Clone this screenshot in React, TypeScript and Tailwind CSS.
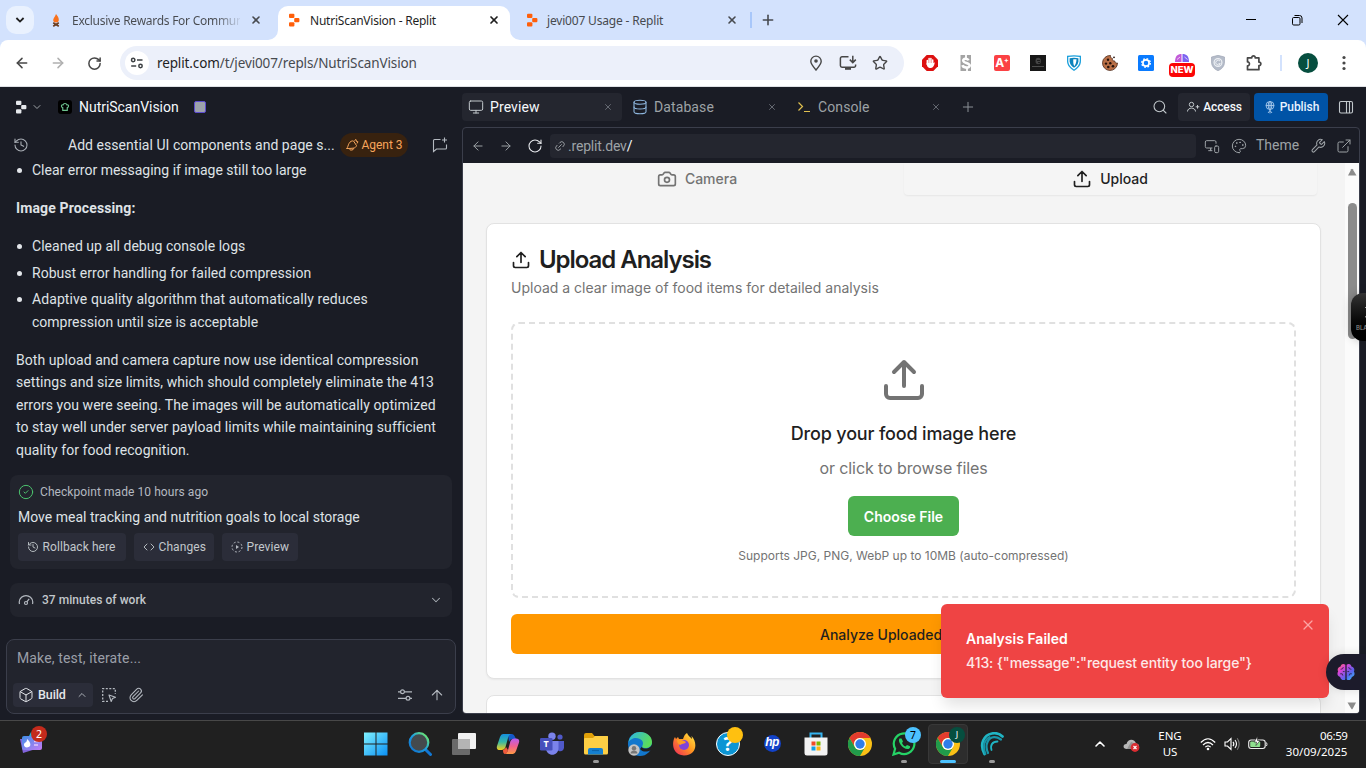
import type { ReactNode } from "react";
import {
  ArrowLeft, ArrowRight, ArrowUp, Box, Camera, ChevronDown, ChevronUp, CircleCheck, Code,
  Database, ExternalLink, History, Link2, Monitor, MonitorSmartphone, Paperclip, Palette,
  Plus, RotateCw, Search, Star, X,
} from "lucide-react";

const PLEX = "font-[Roboto,'Noto_Sans',sans-serif]";
const SEGOE = "font-['Noto_Sans','Open_Sans',sans-serif]";
const INTER = "font-[Inter,'Liberation_Sans',sans-serif]";

function Cell({ className, children }: { className: string; children?: ReactNode }) {
  return <div className={`flex shrink-0 items-center justify-center ${className}`}>{children}</div>;
}

function ReplitLogo({ className }: { className: string }) {
  return (
    <svg viewBox="0 0 16 16" className={className} fill="currentColor">
      <rect x="3" y="1.8" width="5.4" height="4.2" rx="1" />
      <rect x="8.2" y="6" width="5.2" height="4.2" rx="1" />
      <rect x="3" y="10.2" width="5.4" height="4.2" rx="1" />
    </svg>
  );
}

function TabStrip() {
  return (
    <div className={`flex h-10 bg-[#d3e2fd] text-[#474a4f] ${SEGOE}`}>
      <Cell className="ml-1.5 mt-1.5 size-7 rounded-[10px] bg-[#e9f1fe]">
        <svg viewBox="0 0 12 12" className="size-3" fill="none" stroke="#1f1f1f" strokeWidth="1.8"><path d="M2.4 4 6 7.6 9.6 4" /></svg>
      </Cell>
      <Cell className="ml-3.5 w-4">
        <svg viewBox="0 0 16 16" className="size-4">
          <path d="M8 2c2 2.300 3 4 2.800 6.200-.2 1.600-1.300 2.200-2.800 2.200s-2.700-.6-2.800-2.200C5.100 6.500 7 5 8 2Z" fill="#f9711c" />
          <path d="m5.200 10.800 5.600 3.400M10.800 10.800l-5.600 3.400" stroke="#6b3d20" strokeWidth="1.700" />
        </svg>
      </Cell>
      <div className="ml-2 w-[168px] whitespace-nowrap bg-linear-to-r from-[#474a4f] from-85% to-[#474a4f]/10 bg-clip-text text-[12px] leading-[41px] tracking-[-0.27px] text-transparent">Exclusive Rewards For Commun</div>
      <Cell className="w-8"><X className="size-3" strokeWidth={3.200} /></Cell>
      <div className="relative ml-1.5 mt-1.5 flex h-[34px] w-[232px] items-center rounded-t-[10px] bg-white text-[#1f1f1f]">
        <svg viewBox="0 0 10 10" className="absolute -left-2.5 bottom-0 size-2.5" fill="#fff"><path d="M10 0v10H0A10 10 0 0 0 10 0Z" /></svg>
        <svg viewBox="0 0 10 10" className="absolute -right-2.5 bottom-0 size-2.5" fill="#fff"><path d="M0 0v10h10A10 10 0 0 1 0 0Z" /></svg>
        <Cell className="-mt-1.5 ml-2 w-4"><ReplitLogo className="size-4 text-[#ff5f0a]" /></Cell>
        <div className="ml-2 h-[34px] w-[168px] whitespace-nowrap text-[12px] leading-[29px] tracking-[-0.23px]">NutriScanVision - Replit</div>
        <Cell className="-mt-1.5 w-8"><X className="size-3" strokeWidth={3.400} /></Cell>
      </div>
      <Cell className="ml-3.5 w-4"><ReplitLogo className="size-4 text-[#ff5f0a]" /></Cell>
      <div className="ml-[7px] w-[169px] whitespace-nowrap text-[12px] leading-[41px] tracking-[-0.18px]">jevi007 Usage - Replit</div>
      <Cell className="w-8"><X className="size-3" strokeWidth={3.200} /></Cell>
      <Cell className="-ml-px w-2"><div className="h-4 w-0.5 bg-[#a8c7fa]" /></Cell>
      <Cell className="ml-px w-6"><Plus className="size-4" strokeWidth={2.400} /></Cell>
      <div className="ml-auto flex">
        <Cell className="w-[46px]"><svg viewBox="0 0 10 10" className="size-2.5"><path d="M0 4.500h10" stroke="#000" /></svg></Cell>
        <Cell className="w-[46px]">
          <svg viewBox="0 0 12 12" className="size-3" fill="none" stroke="#000"><rect x="1.500" y="3.500" width="7.500" height="7.500" rx="1.200" /><path d="M3.500 1.500h5a2.500 2.500 0 0 1 2.500 2.500v5" /></svg>
        </Cell>
        <Cell className="w-[46px]"><svg viewBox="0 0 12 12" className="size-3" stroke="#000" strokeWidth="1.100"><path d="m1 1 10 10M11 1 1 11" /></svg></Cell>
      </div>
    </div>
  );
}

function AddressRow() {
  return (
    <div className="bg-[#d3e2fd]">
      <div className={`flex h-[47px] items-center rounded-t-[8px] border-b border-[#dfe1e5] bg-white text-[#474747] ${SEGOE}`}>
        <Cell className="ml-1 w-9"><ArrowLeft className="size-4" strokeWidth={2.300} /></Cell>
        <Cell className="w-9"><ArrowRight className="size-4 text-[#b0b0b0]" strokeWidth={2.300} /></Cell>
        <Cell className="w-9"><RotateCw className="size-[15px]" strokeWidth={2.400} /></Cell>
        <div className="ml-2 flex h-[34px] w-[784px] items-center rounded-full bg-[#ecf0fa]">
          <Cell className="ml-[5px] size-6 rounded-full bg-white">
            <svg viewBox="0 0 14 14" className="size-3.5" fill="none" stroke="#3c4043" strokeWidth="1.500">
              <circle cx="3.200" cy="4" r="1.700" /><path d="M7 4h5.500M1.200 10h5" /><circle cx="10.500" cy="10" r="1.700" />
            </svg>
          </Cell>
          <div className="ml-2 w-[642px] whitespace-nowrap text-[13.500px] tracking-[-0.12px] text-[#474a4f]"><span className="text-[#1f1f1f]">replit.com</span>/t/jevi007/repls/NutriScanVision</div>
          <Cell className="ml-px w-8">
            <svg viewBox="0 0 16 16" className="size-4" fill="none" stroke="#474747" strokeWidth="1.400"><path d="M8 15C5 11.500 2.800 9 2.800 6.300a5.200 5.200 0 0 1 10.400 0C13.200 9 11 11.500 8 15Z" /><circle cx="8" cy="6" r="1.800" fill="#474747" stroke="none" /></svg>
          </Cell>
          <Cell className="w-8">
            <svg viewBox="0 0 18 16" className="h-4 w-[18px]" fill="none" stroke="#474747" strokeWidth="1.500"><path d="M9.500 1.800H3A1.600 1.600 0 0 0 1.400 3.400v7.200A1.600 1.600 0 0 0 3 12.200h12a1.600 1.600 0 0 0 1.600-1.600V9.500M13.800.8v6.500M10.800 4.600l3 3 3-3" /><path d="M6 13.500h6" strokeWidth="2.600" /></svg>
          </Cell>
          <Cell className="w-8"><Star className="size-4" strokeWidth={2.100} /></Cell>
        </div>
        <Cell className="ml-2 w-9">
          <svg viewBox="0 0 16 16" className="size-4"><path d="M4.700 0h6.600L16 4.700v6.600L11.300 16H4.700L0 11.300V4.700Z" fill="#dd1010" /><path d="M5.300 5.500v4M7.100 3.600V9M8.900 3.600V9M10.700 5v4" stroke="#fff" strokeWidth="1.500" strokeLinecap="round" /><path d="M4.600 8h6.900l1-.8c.6.300-.6 5.800-3.700 5.800S4.800 11 4.600 8Z" fill="#fff" /></svg>
        </Cell>
        <Cell className="w-9">
          <svg viewBox="0 0 16 16" className="size-4"><path d="M2.500 0H13v16H2.500Z" fill="#a4a4a4" /><path d="M10.500 5.400C9.500 2.800 4.800 3.400 5.200 5.900c.4 2.300 6.500 1.900 6.500 4.700 0 2.900-6.400 2.600-7.200-.4" fill="none" stroke="#fff" strokeWidth="2.600" /><path d="M8 0v4M9 12v4" stroke="#fff" strokeWidth="1.800" /></svg>
        </Cell>
        <Cell className="w-9"><Cell className="size-4 rounded-[2px] bg-[#fb4144] font-[Inter] text-[12px] font-bold leading-none text-white">A<span className="-mt-1.5 text-[7px]">+</span></Cell></Cell>
        <Cell className="w-9">
          <svg viewBox="0 0 16 16" className="size-4"><rect width="16" height="16" fill="#171717" /><ellipse cx="8.200" cy="6" rx="2.700" ry="3.200" fill="#444" /><path d="M7 5.500h3M8 7.500h2M8.500 9v2" stroke="#1b1b1b" /><path d="M2 11.500h12" stroke="#4b4b4b" /></svg>
        </Cell>
        <Cell className="w-9">
          <svg viewBox="0 0 16 16" className="size-4"><path d="M1 .8q7-1.300 14 0v5C15 10.500 12 13.500 8 16 4 13.500 1 10.500 1 5.800Z" fill="#1ca0dc" /><path d="M2.300 2q5.700-1 11.400 0v4C13.600 9.700 11.200 12.300 8 14.400 4.800 12.300 2.300 9.700 2.300 6Z" fill="#fff" /><path d="M3.600 3.200q4.400-.7 8.800 0v3C12.300 9 10.500 11 8 12.800 5.500 11 3.700 9 3.600 6.200Z" fill="#0b83bd" /><path d="M7.300 4.200H10.500c-.1 3-.9 5-2.200 7-1-1.700-1.200-4-1-7Z" fill="#fff" /></svg>
        </Cell>
        <Cell className="w-9">
          <svg viewBox="0 0 16 16" className="size-4"><path d="M8.500.5A7.500 7.500 0 1 0 15.500 8c-1.800.4-2.800-.6-2.700-2-1.800.3-2.800-1-2.300-2.400C9 3.300 8.400 1.900 8.500.5Z" fill="#b96f46" stroke="#4e2a1b" strokeWidth=".8" /><g fill="#25120c"><circle cx="6" cy="4.800" r="1.200" /><circle cx="4" cy="8.600" r="1.200" /><circle cx="8.300" cy="8.300" r="1.200" /><circle cx="6.300" cy="12" r="1.300" /><circle cx="11" cy="11.300" r="1.300" /><circle cx="12" cy="2.300" r=".9" /></g></svg>
        </Cell>
        <Cell className="w-9">
          <svg viewBox="0 0 16 16" className="size-4"><rect width="16" height="16" rx="1.500" fill="#0a7bff" /><circle cx="8" cy="8" r="3.100" fill="none" stroke="#fff" strokeWidth="1.700" /><circle cx="8" cy="8" r="4.300" fill="none" stroke="#fff" strokeWidth="1.400" strokeDasharray="1.688 1.688" /></svg>
        </Cell>
        <Cell className="relative w-9 self-stretch">
          <svg viewBox="0 0 14 8" className="mb-2.5 h-2 w-3.5"><path d="M0 8C0 2 2.500 0 6.500 0v8Z" fill="#c25bd8" /><path d="M7.500 0C11.500 0 14 2 14 8H7.500Z" fill="#7c63f0" /><path d="M2 5.500 5 3M9.500 3l3 2.500" stroke="#fff" strokeWidth=".7" /></svg>
          <div className="absolute left-[5px] top-[23px] h-3.5 w-[26px] rounded-[4px] bg-[#fb0505] text-center font-[Inter] text-[9.500px] font-extrabold leading-[14px] text-white">NEW</div>
        </Cell>
        <Cell className="w-9">
          <svg viewBox="0 0 16 16" className="size-4"><path d="M8 .3 14.500 2v5c0 4.500-3 7.300-6.500 8.700C4.500 14.300 1.500 11.500 1.500 7V2Z" fill="#b5bcc9" stroke="#98a0b0" strokeWidth=".6" /><circle cx="8" cy="7.500" r="3.900" fill="none" stroke="#eef1f5" strokeWidth="1.200" /><path d="M10 6a2.400 2.400 0 1 0 .3 2.700H8.500" fill="none" stroke="#eef1f5" /></svg>
        </Cell>
        <Cell className="w-9">
          <svg viewBox="0 0 18 18" className="size-[18px]" fill="none" stroke="#474747" strokeWidth="1.700"><path d="M2.500 3.800h4.300c-.3-2.500 3.700-2.500 3.400 0h3.700v4.300c2.600-.3 2.600 3.700 0 3.400v4.200H2.500v-3.900c2.600.2 2.600-4.100 0-3.900Z" strokeLinejoin="round" /></svg>
        </Cell>
        <Cell className="w-[18px]"><div className="h-4 w-0.5 bg-[#d3e2fd]" /></Cell>
        <Cell className="w-9"><Cell className="size-5 rounded-full bg-[#064e3f] text-[11px] text-white">J</Cell></Cell>
        <Cell className="w-9"><svg viewBox="0 0 4 16" className="h-4 w-1" fill="#474747"><circle cx="2" cy="2.500" r="1.600" /><circle cx="2" cy="8" r="1.600" /><circle cx="2" cy="13.500" r="1.600" /></svg></Cell>
      </div>
    </div>
  );
}

function PaneTab({ icon, label, active }: { icon: ReactNode; label: string; active?: boolean }) {
  return (
    <div className={`mr-1 flex h-7 w-40 items-center rounded-[4px] ${active ? "bg-[#24262f] text-[#f5f9fc]" : "text-[#9da2a6]"}`}>
      <Cell className="ml-[6px] w-4">{icon}</Cell>
      <div className="ml-1.5 w-[113px] text-[14px] tracking-[0.1px]">{label}</div>
      <X className="size-2.5 shrink-0 text-[#6b7078]" strokeWidth={2.200} />
    </div>
  );
}

function WorkspaceHeader() {
  return (
    <div className={`flex h-10 items-center ${PLEX}`}>
      <div className="flex w-[462px] items-center text-[#f5f9fc]">
        <Cell className="ml-[13px] w-4"><ReplitLogo className="size-4 text-[#e6e8ec]" /></Cell>
        <Cell className="ml-0.5 w-3"><ChevronDown className="size-3 text-[#9da2a6]" /></Cell>
        <Cell className="ml-[15px] size-3.5 rounded-[3px] bg-black">
          <svg viewBox="0 0 12 12" className="size-2.5" fill="none" stroke="#6cc18e" strokeWidth="1.400"><path d="M3.300 10V6.800C.8 6.200 1.500 2.800 3.700 3.400 4.200 1.200 7.800 1.200 8.300 3.400 10.500 2.800 11.200 6.200 8.700 6.800V10Z" /></svg>
        </Cell>
        <div className="ml-[7px] w-[100px] text-[14px] tracking-[-0.03px]">NutriScanVision</div>
        <div className="ml-[15px] size-3 rounded-[2px] border-[1.500px] border-[#5c4bd0] bg-[#9da2ac]" />
      </div>
      <PaneTab active label="Preview" icon={<Monitor className="size-4 text-[#c2c8cc]" strokeWidth={1.500} />} />
      <PaneTab label="Database" icon={<Database className="size-4 text-[#8fb8e0]" strokeWidth={1.600} />} />
      <PaneTab label="Console" icon={<svg viewBox="0 0 16 16" className="size-4" fill="none" stroke="#e0c050" strokeWidth="1.200"><path d="m2.500 3.500 4 4-4 4M8 12.500h6" /></svg>} />
      <Cell className="ml-1.5 w-4"><Plus className="size-4 text-[#8b9097]" strokeWidth={1.500} /></Cell>
      <Cell className="ml-auto w-4 text-[#c2c8cc]"><Search className="size-4" strokeWidth={1.600} /></Cell>
      <Cell className="ml-[10px] h-7 w-[72px] rounded-[4px] bg-[#24262f] text-[12px] text-[#f5f9fc]">
        <svg viewBox="0 0 14 14" className="size-3.5" fill="none" stroke="#c2c8cc"><circle cx="5.500" cy="4.500" r="2.200" /><path d="M1.500 11.500c0-4.500 8-4.500 8 0M11.500 5v3.600M9.700 6.800h3.600" /></svg>
        <span className="ml-[3px] font-medium tracking-[-0.1px]">Access</span>
      </Cell>
      <Cell className="ml-1 h-7 w-[74px] rounded-[4px] bg-[#0053a6] text-[12px] text-[#e8f2ff]">
        <svg viewBox="0 0 14 14" className="size-3.5" fill="none" stroke="#a9c9ec" strokeWidth=".9"><circle cx="7" cy="5.500" r="4" /><ellipse cx="7" cy="5.500" rx="1.800" ry="4" /><path d="M3 5.500h8M7 1.500v12M5 13l2-2.500L9 13" /></svg>
        <span className="ml-[3px] font-medium tracking-[-0.08px]">Publish</span>
      </Cell>
      <Cell className="ml-2.5 mr-3 w-4">
        <svg viewBox="0 0 16 16" className="size-4" fill="none" stroke="#c2c8cc" strokeWidth="1.100"><rect x="1.500" y="2.500" width="13" height="11.500" rx="1.500" /><path d="M8.500 2.500V14M11.500 2.500V14" /></svg>
      </Cell>
    </div>
  );
}

function Bullet({ children }: { children: ReactNode }) {
  return (
    <li className="flex">
      <span className="mt-[9px] size-[5px] shrink-0 rounded-full bg-[#e3e6ea] ml-[1px] mr-[10px]" />
      <div>{children}</div>
    </li>
  );
}

function SmallButton({ className, icon, label }: { className: string; icon: ReactNode; label: string }) {
  return (
    <div className={`flex h-7 items-center rounded-[4px] bg-[#2b2d39] pl-[9px] text-[12px] text-[#c2c8cc] ${className}`}>
      {icon}<span className="ml-[3.500px] whitespace-nowrap tracking-[0.08px]">{label}</span>
    </div>
  );
}

function AgentPane() {
  return (
    <div className={`flex w-[462px] shrink-0 flex-col text-[#dfe2e6] ${PLEX}`}>
      <div className="flex h-9 items-center text-[14px]">
        <Cell className="ml-[13px] w-4"><History className="size-4 text-[#a9aeb5]" strokeWidth={1.600} /></Cell>
        <div className="ml-[39px] w-[268px] whitespace-nowrap tracking-[0.04px]">Add essential UI components and page s...</div>
        <Cell className="ml-1 h-6 w-[68px] rounded-full bg-[#38220f] text-[12px] text-[#f7a65c]">
          <svg viewBox="0 0 14 14" className="size-3.5 shrink-0" fill="none" stroke="#f7a65c" strokeLinejoin="round"><path d="M1.500 10.500C3 9.500 3 7 4 5.500 5 3.500 7 2.500 8.500 3l3 4.500c-.3 1.500-1.500 2.500-3.500 2.700-2 .2-4 .3-6.500.3Zm3 .2 1 1.500 2.500-.5.500-1.500M9.500 2.500l1.500-1 .5 2 1.500.3-1 1.700" /></svg>
          <span className="ml-[2px] whitespace-nowrap">Agent 3</span>
        </Cell>
        <Cell className="ml-6 w-4">
          <svg viewBox="0 0 16 16" className="size-4" fill="none" stroke="#b4b9c0" strokeWidth="1.100"><path d="M8.500 2.500h-6a1 1 0 0 0-1 1v11l3-2.500h9a1 1 0 0 0 1-1V7.500M12.500.5v5M10 3h5" /></svg>
        </Cell>
      </div>
      <div className="h-[310px] px-4 text-[14px] leading-[22.500px] tracking-[0.06px] whitespace-nowrap">
        <ul className="-mt-1 tracking-[-0.01px]"><Bullet>Clear error messaging if image still too large</Bullet></ul>
        <p className="mt-[15.500px] font-bold tracking-[0.13px]">Image Processing:</p>
        <ul className="mt-[15.500px] flex flex-col gap-1">
          <Bullet><span className="tracking-[0.030px]">Cleaned up all debug console logs</span></Bullet>
          <Bullet><span className="tracking-[0.040px]">Robust error handling for failed compression</span></Bullet>
          <Bullet><span className="tracking-[0.090px]">Adaptive quality algorithm that automatically reduces</span><br /><span className="tracking-[0.010px]">compression until size is acceptable</span></Bullet>
        </ul>
        <p className="mt-[15.500px]">
          Both upload and camera capture now use identical compression<br />settings and size limits, which should completely eliminate the 413<br />errors you were seeing. The images will be automatically optimized<br />to stay well under server payload limits while maintaining sufficient<br />quality for food recognition.
        </p>
      </div>
      <div className="ml-2.5 mt-0.5 h-[94px] w-[442px] rounded-lg bg-[#22242d] px-2 pt-2">
        <div className="flex h-[18px] items-center text-[12px] text-[#b4b9c0]">
          <CircleCheck className="size-4 text-[#4cc26e]" strokeWidth={1.500} /><span className="ml-1.5 tracking-[0.070px]">Checkpoint made 10 hours ago</span>
        </div>
        <div className="mt-[5px] text-[14px] leading-[22px] tracking-[0.01px]">Move meal tracking and nutrition goals to local storage</div>
        <div className="mt-[5px] flex gap-2">
          <SmallButton className="w-[108px]" label="Rollback here" icon={<History className="size-3 shrink-0" strokeWidth={1.800} />} />
          <SmallButton className="w-20" label="Changes" icon={<Code className="size-3 shrink-0" strokeWidth={1.800} />} />
          <SmallButton className="w-[76px]" label="Preview" icon={<svg viewBox="1 1 12 12" className="size-3 shrink-0" fill="none" stroke="#b4b9c0"><circle cx="7" cy="7" r="5" strokeDasharray="2 1.900" /><path d="M6 5v4l3-2Z" fill="#b4b9c0" stroke="none" /></svg>} />
        </div>
      </div>
      <div className="ml-2.5 mt-3.5 flex h-[34px] w-[442px] items-center rounded-lg bg-[#22242d] pl-2 text-[12px] text-[#c2c8cc]">
        <svg viewBox="0 0 16 16" className="size-4" fill="none" stroke="#b4b9c0" strokeWidth="1.200"><path d="M1.500 12a6.700 6.700 0 0 1 2-6.700 6.700 6.700 0 0 1 9 0 6.700 6.700 0 0 1 2 6.700M8.800 9.800l2.400-3" /><circle cx="8" cy="11" r="1.500" /></svg>
        <span className="ml-2 w-[387px] font-medium tracking-[0.04px]">37 minutes of work</span>
        <ChevronDown className="size-3.5 text-[#a9aeb5]" strokeWidth={1.800} />
      </div>
      <div className="ml-1.5 mt-[22px] h-[75px] w-[450px] rounded-lg border border-[#3b3e4b] bg-[#22242d] px-1.5">
        <div className="ml-1 mt-2 text-[14px] leading-[21px] tracking-[0.14px] text-[#9b9fa8]">Make, test, iterate...</div>
        <div className="mt-3.5 flex h-6 items-center text-[#b4b9c0]">
          <div className="flex h-6 w-20 items-center rounded-[4px] bg-[#2b2d39] pl-[5px] text-[12.500px] font-medium text-[#e3e6ea]">
            <Box className="size-4" strokeWidth={1.500} /><span className="ml-1 w-[32px] tracking-[-0.1px]">Build</span><ChevronUp className="ml-[6px] size-3 text-[#a9aeb5]" />
          </div>
          <svg viewBox="0 0 16 16" className="ml-2 size-4" fill="none" stroke="#b4b9c0" strokeWidth="1.300"><path d="M7 14.300H1.700V1.700h12.600V7" strokeDasharray="2 1.500" /><path d="m8 8 6.500 2.300-3 1.200-1.300 3Z" strokeWidth="1.100" strokeLinejoin="round" /></svg>
          <Paperclip className="ml-[11px] size-4" strokeWidth={1.600} />
          <svg viewBox="0 0 16 16" className="ml-[253px] size-4" fill="none" stroke="#b4b9c0" strokeWidth="1.200"><path d="M1 4.800h2.500M7.500 4.800H15M1 11.300h8M13 11.300h2" /><circle cx="5.500" cy="4.800" r="1.900" /><circle cx="11" cy="11.300" r="1.900" /></svg>
          <ArrowUp className="ml-4 size-4" strokeWidth={1.600} />
        </div>
      </div>
    </div>
  );
}

function UploadIcon({ className }: { className: string }) {
  return (
    <svg viewBox="0 0 24 24" className={`shrink-0 ${className}`} fill="none" stroke="currentColor" strokeWidth="2" strokeLinecap="round" strokeLinejoin="round">
      <path d="M21 15v4a2 2 0 0 1-2 2H5a2 2 0 0 1-2-2v-4M17 8l-5-5-5 5M12 3v12" />
    </svg>
  );
}

function BrowserBar() {
  return (
    <div className={`flex h-[35px] shrink-0 items-center text-[#9da2a6] ${PLEX}`}>
      <Cell className="ml-[7px] w-4"><ArrowLeft className="size-3.5" strokeWidth={1.700} /></Cell>
      <Cell className="ml-3 w-4"><ArrowRight className="size-3.5" strokeWidth={1.700} /></Cell>
      <Cell className="ml-[13px] w-4 text-[#e6e8ec]"><RotateCw className="size-4" strokeWidth={1.600} /></Cell>
      <div className="ml-[7px] flex h-6 w-[646px] items-center rounded-[4px] bg-[#24262f] pl-1 text-[14px] leading-none">
        <Link2 className="size-3 -rotate-45" strokeWidth={1.800} /><span className="ml-[2px] tracking-[-0.18px]">.replit.dev<span className="text-[#f5f9fc]">/</span></span>
      </div>
      <Cell className="ml-2 w-4"><MonitorSmartphone className="size-4" strokeWidth={1.500} /></Cell>
      <Cell className="ml-[11px] w-4"><Palette className="size-4" strokeWidth={1.500} /></Cell>
      <div className="ml-[9px] w-[44px] text-[14px]">Theme</div>
      <Cell className="ml-2.5 w-4">
        <svg viewBox="0 0 24 24" className="size-4" fill="none" stroke="currentColor" strokeWidth="1.600" strokeLinejoin="round"><path d="M14.700 6.300a1 1 0 0 0 0 1.400l1.600 1.600a1 1 0 0 0 1.400 0l3.770-3.770a6 6 0 0 1-7.940 7.940l-6.910 6.910a2.120 2.120 0 0 1-3-3l6.910-6.910a6 6 0 0 1 7.940-7.940Z" /></svg>
      </Cell>
      <Cell className="ml-[10px] w-4"><ExternalLink className="size-4" strokeWidth={1.500} /></Cell>
    </div>
  );
}

function PreviewPane() {
  return (
    <div className="mr-[6px] flex h-[587px] flex-1 flex-col overflow-hidden rounded-[4px] border border-[#3b3e4b]">
      <BrowserBar />
      <div className={`flex min-h-0 flex-1 bg-[#f4f4f4] text-[#1f1f1f] ${INTER}`}>
        <div className="w-[882px] overflow-hidden pl-[23px] pr-[24px]">
          <div className="flex h-8 items-start text-[14px] font-medium">
            <div className="flex h-8 w-[418px] items-center justify-center pl-[5px] pr-px text-[#737373]"><Camera className="size-5" /><span className="ml-2 leading-5">Camera</span></div>
            <div className="flex h-8 w-[413px] items-center justify-center rounded-b-[4px] bg-[#f5f5f5] pr-px shadow-[0_1px_2px_rgba(0,0,0,0.06)]"><UploadIcon className="size-5" /><span className="ml-2 leading-5">Upload</span></div>
          </div>
          <div className="mt-7 h-[456px] rounded-lg border border-[#e2e2e2] bg-white px-6 pt-5 shadow-xs">
            <div className="flex h-8 items-center"><UploadIcon className="size-5" /><h1 className="ml-2 text-[24px] font-semibold tracking-[-1.05px]">Upload Analysis</h1></div>
            <p className="mt-0.5 text-[14px] leading-5 text-[#737373]">Upload a clear image of food items for detailed analysis</p>
            <div className="mt-6 flex h-[276px] flex-col items-center rounded-lg border-2 border-dashed border-[#e0e0e0] pt-8">
              <UploadIcon className="size-12 text-[#737373]" />
              <p className="mt-4 text-[18px] font-medium leading-7 tracking-[-0.17px]">Drop your food image here</p>
              <p className="mt-2 text-[16px] leading-6 tracking-[-0.09px] text-[#737373]">or click to browse files</p>
              <div className="mt-4 flex h-10 w-[111px] items-center justify-center rounded-md bg-[#4caf50] text-[14px] font-semibold text-white">Choose File</div>
              <p className="mt-3 text-[12px] leading-4 text-[#737373]">Supports JPG, PNG, WebP up to 10MB (auto-compressed)</p>
            </div>
            <div className="mt-4 flex h-10 items-center justify-center rounded-md bg-[#ff9800] text-[14px] font-medium">Analyze Uploaded Image</div>
          </div>
          <div className="mt-4 h-20 rounded-lg border border-[#e2e2e2] bg-white" />
        </div>
        <div className="flex w-3.5 flex-col items-center bg-[#fbfbfb]">
          <svg viewBox="0 0 10 8" className="mt-[5px] h-2 w-2.5" fill="#8b8b8b"><path d="M1 7.500 4.300 1.200Q5 .2 5.700 1.200L9.500 7.500Z" /></svg>
          <div className="mt-[27px] h-[136px] w-[9px] rounded-full bg-[#8b8b8b]" />
          <svg viewBox="0 0 10 8" className="mb-[3px] mt-auto h-2 w-2.5 rotate-180" fill="#8b8b8b"><path d="M1 7.500 4.300 1.200Q5 .2 5.700 1.200L9.500 7.500Z" /></svg>
        </div>
      </div>
    </div>
  );
}

function ChromeIcon() {
  return (
    <svg viewBox="0 0 24 24" className="size-6">
      <circle cx="12" cy="12" r="12" fill="#fbc116" />
      <path d="M1.600 6A12 12 0 0 1 22.400 6H12a6 6 0 0 0-5.200 9Z" fill="#e33b2e" />
      <path d="M1.600 6A12 12 0 0 0 12 24l5.200-9a6 6 0 0 1-10.400 0Z" fill="#219b4b" />
      <circle cx="12" cy="12" r="6" fill="#fff" /><circle cx="12" cy="12" r="4.700" fill="#2f7de9" />
    </svg>
  );
}

function TaskIcon({ children, active, running }: { children: ReactNode; active?: boolean; running?: boolean }) {
  return (
    <Cell className="relative h-12 w-11">
      {active && <div className="absolute left-0.5 top-1 h-10 w-10 rounded-[4px] border border-[#383838] bg-[#2d2d2d]" />}
      <div className="relative">{children}</div>
      {running && <div className="absolute bottom-[5px] left-[19px] h-[3px] w-1.5 rounded-full bg-[#9a9a9a]" />}
      {active && <div className="absolute bottom-[5px] left-3.5 h-[3px] w-4 rounded-full bg-[#4cc2ff]" />}
    </Cell>
  );
}

function Taskbar() {
  return (
    <div className={`flex h-12 items-center border-t border-[#484848] bg-[#202020] text-white ${SEGOE}`}>
      <div className="relative -mt-px ml-[18px] h-12 w-7">
        <svg viewBox="0 0 24 26" className="mt-2.5 h-[26px] w-6">
          <defs><linearGradient id="wd" x1="0" y1="0" x2="1" y2="1"><stop stopColor="#3f8fe8" /><stop offset="1" stopColor="#c47bf5" /></linearGradient></defs>
          <path d="m13 2-2 4h5Z" fill="#18b7d9" /><path d="m2 9 3 14L21 18 20 9Z" fill="#8264dc" /><rect x="4" y="6" width="20" height="14" rx="2" fill="url(#wd)" />
          <path d="M9 9c4 3 5 8 0 8.500C4.500 17 6 12.500 7.500 12.500 8.500 12 9 11 9 9Z" fill="#fff" /><path d="M16 11.500h5M16 15h4" stroke="#e4c8fb" strokeWidth="1.500" />
        </svg>
        <div className="absolute left-[13px] top-[6px] size-4 rounded-full bg-[#c42b1c] text-center text-[10.500px] leading-4">2</div>
      </div>
      <div className="-mt-0.5 ml-[308px] flex">
        <TaskIcon>
          <svg viewBox="0 0 24 24" className="size-6"><defs><linearGradient id="win" x1="0" y1="0" x2="1" y2="1" ><stop stopColor="#80f2ff" /><stop offset="1" stopColor="#0a90f5" /></linearGradient></defs><path d="M0 .5h11.500v11H0Zm12.500 0h11v11h-11ZM0 12.500h11.500v11H0Zm12.500 0h11v11h-11Z" fill="url(#win)" /></svg>
        </TaskIcon>
        <TaskIcon>
          <svg viewBox="0 0 24 24" className="size-6" fill="none"><defs><linearGradient id="sr" x1="1" y1="0" x2="0" y2="1"><stop offset=".1" stopColor="#6be675" /><stop offset=".5" stopColor="#1b9de2" /><stop offset="1" stopColor="#0f6cc8" /></linearGradient></defs><path d="m17.500 17.500 5 5" stroke="#1277d3" strokeWidth="3" strokeLinecap="round" /><circle cx="11" cy="10.500" r="9.300" stroke="url(#sr)" strokeWidth="2.200" fill="#444a4d" /></svg>
        </TaskIcon>
        <TaskIcon>
          <svg viewBox="0 0 24 24" className="size-6"><rect x="6" y="1" width="18" height="16" rx="1" fill="#f1f1f1" /><rect x="0" y="7" width="18" height="16" rx="1" fill="#6a6a6a" /><path d="M6 7h12v10H6Z" fill="#b4b4b4" /></svg>
        </TaskIcon>
        <TaskIcon>
          <svg viewBox="0 0 24 24" className="size-6"><defs><linearGradient id="c1" x1="0" y1="0" x2="0" y2="1"><stop stopColor="#148fe0" /><stop offset=".5" stopColor="#37b9a5" /><stop offset="1" stopColor="#f6d01c" /></linearGradient><linearGradient id="c2" x1="0" y1="0" x2="0" y2="1"><stop stopColor="#b75cf0" /><stop offset=".5" stopColor="#f0608f" /><stop offset="1" stopColor="#ff9a44" /></linearGradient></defs>
            <path d="M12 2h4q2 0 2.800 2.500L20 7h-4q-2 0-3 3Z" fill="#1558c8" /><path d="M7 2h8q-2 .5-3 4l-2.500 9q-1 3-4 3H4q-4 0-3-4L4 5q1-3 3-3Z" fill="url(#c1)" /><path d="M17 22H9q2-.5 3-4l2.500-9q1-2.500 3.500-2.500h2q4 0 3 4L20 19q-1 3-3 3Z" fill="url(#c2)" /><path d="M7 18q2 0 3-3l2 3q-1 4-3 4-2 0-2-4Z" fill="#ee5a3c" /></svg>
        </TaskIcon>
        <TaskIcon>
          <div className="relative size-6">
            <svg viewBox="0 0 24 24" className="size-6"><circle cx="12" cy="4.200" r="3.700" fill="#7b83eb" /><circle cx="20" cy="5" r="2.600" fill="#5059c9" /><path d="M16 9h8v6.500c0 4-5 5-7 2Z" fill="#5059c9" /><path d="M6 9h12.500v7c0 9-12.500 9-12.500 0Z" fill="#7b83eb" /><rect x="0" y="6" width="12.500" height="12.500" rx="1.300" fill="#4650bc" /></svg>
            <span className="absolute left-0 top-[6px] w-3 text-center text-[9px] font-bold leading-3">T</span>
          </div>
        </TaskIcon>
        <TaskIcon running>
          <svg viewBox="0 0 24 24" className="size-6"><path d="M0 3q0-2 2-2h6l2.500 3H24v7H0Z" fill="#e0a008" /><path d="M0 7q0-1 1-1h8l2-2h12q1 0 1 1v16q0 1.500-1.500 1.500h-21Q0 22.500 0 21Z" fill="#fdcf45" /><path d="M4 22.500V18q0-2 2-2h11q2 0 2 2v4.500Z" fill="#1580d0" /><path d="M8 18.500h7" stroke="#0c64ab" strokeWidth="1.200" /></svg>
        </TaskIcon>
        <TaskIcon>
          <svg viewBox="0 0 24 24" className="size-6"><defs><linearGradient id="ed" x1="0" y1="0" x2="1" y2=".4"><stop stopColor="#2bb5e8" /><stop offset="1" stopColor="#5bdc5a" /></linearGradient></defs><circle cx="12" cy="12" r="12" fill="#1277cd" /><path d="M24 10.500c0 4-3 6-7 6-2.500 0-3.500-1-2.500-2.500L12 17c2 3 7 3.500 11 1l1-2Z" fill="#202020" /><path d="M.5 10C2 3 7 0 12 0c7 0 12 4.500 12 10 0 4-3 6-7 6-2.500 0-3.500-1-2.500-2.500C17 9 11 4.500 5 6.500 3 7.200 1.500 8.500.500 10Z" fill="url(#ed)" /><circle cx="6" cy="18" r="5.700" fill="#c4c4c4" /><circle cx="6" cy="16.300" r="2.200" fill="#777" /><path d="M2.500 21.500c0-4 7-4 7 0Z" fill="#777" /></svg>
        </TaskIcon>
        <TaskIcon>
          <svg viewBox="0 0 24 24" className="size-6"><defs><linearGradient id="ff" x1="1" y1="0" x2="0" y2="1"><stop stopColor="#fff04d" /><stop offset=".45" stopColor="#ff9a1f" /><stop offset="1" stopColor="#f0205e" /></linearGradient></defs><path d="M15 1c1 3 3 3.500 5 6 0-1.500-.5-2-.5-3 6 6 6 19-7.500 19.500C-1 23 0 9 3 5l1 2 2-2 1 2h4c1-3 2-5 4-6Z" fill="url(#ff)" /><circle cx="12" cy="13" r="5" fill="#8043d8" /><path d="M5 8c4-1 7 1 9 2-1 2-3 1.500-4 2l-2 1C6 12 5 10 5 8Z" fill="#ff9b25" /></svg>
        </TaskIcon>
        <TaskIcon>
          <div className="relative size-6 rounded-full border-[1.500px] border-white bg-[#0c95d4] text-center text-[19px] font-bold leading-[22px]">?<div className="absolute -right-1 -top-1.5 size-4 rounded-full bg-[#ffc010]" /></div>
        </TaskIcon>
        <TaskIcon><div className="size-[17px] rounded-full bg-[#1242c8] text-center font-['Liberation_Sans',sans-serif] text-[12px] font-bold italic leading-[15px] tracking-[-0.5px]">hp</div></TaskIcon>
        <TaskIcon>
          <svg viewBox="0 0 24 24" className="size-6"><path d="M6.500 7V1.500h11V7" fill="none" stroke="#35b3ef" strokeWidth="2" /><path d="M.500 5.500h23V21q0 2.500-2.500 2.500H3Q.5 23.500.5 21Z" fill="#f3f3f3" /><path d="M7.500 9.500h4v4h-4Z" fill="#f04c28" /><path d="M12.500 9.500h4v4h-4Z" fill="#7db800" /><path d="M7.500 14.500h4v4h-4Z" fill="#119ee6" /><path d="M12.500 14.500h4v4h-4Z" fill="#fcb514" /></svg>
        </TaskIcon>
        <TaskIcon><ChromeIcon /></TaskIcon>
        <TaskIcon running>
          <div className="relative"><svg viewBox="0 0 24 24" className="size-6" fill="none" stroke="#25d366"><path d="m1.500 22.500 1.600-5.800a10.300 10.300 0 1 1 4 4Z" strokeWidth="2.200" /><path d="M7.500 6.500c-2.500 3 3.500 11.500 9 10.500 2.500-1 1.500-3 1-3l-2.500-1-1.500 1.500c-1.500-.5-3-2-3.500-3.500L11 9.500 9.500 6.500Z" fill="#25d366" stroke="none" /></svg><div className="absolute -right-[5px] -top-[5px] size-4 rounded-full bg-[#4cc2ff] text-center text-[10.500px] leading-4 text-black">7</div></div>
        </TaskIcon>
        <TaskIcon active><div className="relative"><ChromeIcon /><div className="absolute -right-[5px] -top-[5px] size-4 rounded-full bg-[#064e3f] text-center text-[9px] leading-4">J</div></div></TaskIcon>
        <TaskIcon running>
          <svg viewBox="0 0 24 24" className="size-6" fill="none" stroke="#20b5c4" strokeLinecap="round"><path d="M4.500 22C-1 12 4 3 12 1.500c4-.8 8 .5 10.500 3" strokeWidth="2.700" /><path d="M8 21C4 12 9 5.500 14 5.200c3-.2 5 1 7 2.300" strokeWidth="2.200" stroke="#1897ab" /><path d="M11.500 18c-1.500-5 1-8.500 6-8.500" strokeWidth="1.800" /><path d="M5.500 22c-3-8-1-14 4-17" strokeWidth="2" stroke="#1795a6" /></svg>
        </TaskIcon>
      </div>
      <Cell className="-mt-px ml-[77px] w-[18px]"><ChevronUp className="size-4" strokeWidth={2.400} /></Cell>
      <Cell className="ml-3.5 w-[18px]">
        <svg viewBox="0 0 18 14" className="h-3.5 w-[18px]"><path d="M4 11C-1 11 0 5.500 3.500 6 5 0 12 1 13 5.500c4 0 4 5.500 0 5.500Z" fill="#b8b8b8" /><path d="M4 11 8 4l5 2-1 5Z" fill="#929292" /><circle cx="12" cy="9.500" r="4.400" fill="#d92c31" /><path d="m10.500 8 3 3m0-3-3 3" stroke="#fff" strokeWidth="1.100" /></svg>
      </Cell>
      <div className="-mt-0.5 ml-[14px] w-[30px] text-center text-[11.500px] leading-4">ENG<br />US</div>
      <Cell className="-mt-px ml-[14px] w-[18px]">
        <svg viewBox="0 0 16 14" className="h-3.5 w-4" fill="none" stroke="#fff" strokeWidth="1.200"><path d="M.8 5.500q7.200-7.500 14.400 0M3 8q5-5 10 0M5.300 10.200q2.700-2.700 5.400 0" /><circle cx="8" cy="12" r="1.300" fill="#fff" stroke="none" /></svg>
      </Cell>
      <Cell className="-mt-px ml-1.5 w-[18px]">
        <svg viewBox="0 0 16 14" className="h-3.5 w-4" fill="none" stroke="#fff" strokeWidth="1.100"><path d="M1 5h2.500L7 1.500v11L3.500 9H1ZM9 4.800q1.700 2.200 0 4.400M11 3q3 4 0 8" /><path d="M13.200 1.300q4 5.700 0 11.400" stroke="#777" /></svg>
      </Cell>
      <Cell className="-mt-1 ml-[7px] w-5">
        <svg viewBox="0 0 20 14" className="h-3.5 w-5"><rect x=".7" y="4" width="16.500" height="8.500" rx="2.500" fill="none" stroke="#eee" strokeWidth="1.100" /><path d="M18.500 6.500q1 1.700 0 3.500" stroke="#eee" /><rect x="2.200" y="5.500" width="10" height="5.500" rx="1" fill="#8fe08f" /><path d="M9.500.5 6 6h2.500L8 9.500 12 4.500H9.500Z" fill="#fff" stroke="#202020" strokeWidth=".6" /></svg>
      </Cell>
      <div className="-mt-0.5 ml-auto mr-[18.500px] whitespace-nowrap text-right text-[11.500px] leading-4 tracking-[0.050px]"><span className="tracking-[-0.4px]">06:59</span><br />30/09/2025</div>
    </div>
  );
}

export default function App() {
  return (
    <div className="relative flex h-[768px] w-[1366px] flex-col overflow-hidden bg-[#1a1c25]">
      <TabStrip />
      <AddressRow />
      <WorkspaceHeader />
      <div className="flex h-[593px] shrink-0">
        <AgentPane />
        <PreviewPane />
      </div>
      <Taskbar />

      <div className={`absolute left-[941px] top-[604px] h-[94px] w-[388px] rounded-md bg-[#ef4444] pl-[25px] pt-[25px] text-[14px] leading-5 text-white shadow-[0_10px_15px_-3px_rgba(0,0,0,0.12)] ${INTER}`}>
        <X className="absolute right-[13px] top-[13px] size-4 text-[#fca5a5]" strokeWidth={1.900} />
        <p className="font-semibold">Analysis Failed</p>
        <p className="mt-1 font-medium tracking-[-0.12px] text-[#fde8e8]">413: {'{"message":"request entity too large"}'}</p>
      </div>
      <div className="absolute right-0 top-[293px] h-12 w-[15px] overflow-hidden rounded-l-[12px] bg-linear-to-b from-[#343434] to-black shadow-[0_0_10px_rgba(0,0,0,0.25)]">
        <svg viewBox="0 0 4 12" className="absolute -right-0.5 top-3.5 h-3 w-1" stroke="#bbb"><path d="m1 0 3 2M2 6l2 1M1 10l3-1" /></svg>
        <span className="absolute left-[5px] top-[30px] font-[Inter] text-[6px] font-medium leading-[9px] text-[#8d8d8d]">BLACK</span>
      </div>
      <div className="absolute right-0 top-[654px] flex h-9 w-10 items-center rounded-l-full bg-[#1c1b2b] pl-[11px] shadow-[0_0_10px_rgba(0,0,0,0.12)]">
        <svg viewBox="0 0 20 20" className="size-[18px]">
          <defs><linearGradient id="br" x1="0" y1="0" x2="1" y2="1"><stop stopColor="#ff7a59" /><stop offset=".3" stopColor="#d943d9" /><stop offset=".65" stopColor="#5a62ee" /><stop offset="1" stopColor="#35c5f3" /></linearGradient></defs>
          <path d="M9.300 2C7-.2 4 1.500 4 4 1 4.500 0 7.500 1.300 9.500-.5 12 1 15 3.500 15.500 4 19 8 20 9.300 18ZM10.700 2C13-.2 16 1.500 16 4c3 .5 4 3.500 2.700 5.500 1.800 2.500.3 5.500-2.200 6C16 19 12 20 10.700 18Z" fill="url(#br)" />
          <path d="M4 7q3 0 3-2.500M3.500 12q3-1 3 2M16 7q-3 0-3-2.500M16.500 12q-3-1-3 2M6.500 9.500h2M11.500 9.500h2" fill="none" stroke="#1c1b2b" strokeWidth=".8" />
        </svg>
      </div>
    </div>
  );
}
